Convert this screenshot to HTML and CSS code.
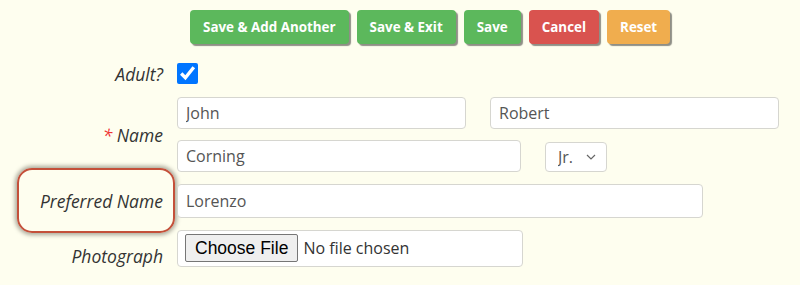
FILE: index.html
```html
<!DOCTYPE html>
<html>
<head>
    <meta charset="utf-8">
    <title>Edit Person</title>
    <link rel="stylesheet" href="styles.css">
</head>
<body>
    <div class="toolbar">
        <button type="button" class="btn btn-success">Save &amp; Add Another</button>
        <button type="button" class="btn btn-success">Save &amp; Exit</button>
        <button type="button" class="btn btn-success">Save</button>
        <button type="button" class="btn btn-danger">Cancel</button>
        <button type="button" class="btn btn-warning">Reset</button>
    </div>
    <form class="form">
        <label class="lbl" for="adult">Adult?</label>
        <div class="ctl">
            <input type="checkbox" id="adult" class="chk" checked>
        </div>

        <label class="lbl" for="first"><span class="req">*</span> Name</label>
        <div class="ctl ctl-stack">
            <div class="line">
                <input type="text" id="first" class="inp w-first" value="John">
                <input type="text" class="inp w-middle" value="Robert">
            </div>
            <div class="line">
                <input type="text" class="inp w-last" value="Corning">
                <div class="selwrap">
                    <select class="inp sel">
                        <option>Jr.</option>
                    </select>
                    <svg class="chev" width="10" height="6" viewBox="0 0 10 6"><path d="M1 1l4 4 4-4" fill="none" stroke="#666" stroke-width="1.2"/></svg>
                </div>
            </div>
        </div>

        <div class="lbl-cell">
            <label class="lbl lbl-hl" for="pref">Preferred Name</label>
        </div>
        <div class="ctl">
            <input type="text" id="pref" class="inp w-pref" value="Lorenzo">
        </div>

        <label class="lbl lbl-low" for="photo">Photograph</label>
        <div class="ctl">
            <div class="filebox">
                <input type="file" id="photo" class="file">
            </div>
        </div>
    </form>
</body>
</html>
```

FILE: styles.css
```css
body { margin: 0; background: #fefeef; font-family: "Open Sans", "Noto Sans", sans-serif; font-size: 16px; color: #333; }

.toolbar { display: flex; gap: 8px; padding: 10px 0 0 190px; }
.btn { border: none; border-radius: 4px; height: 34px; padding: 0 13px; color: #fff; font-family: inherit; font-size: 13.4px; font-weight: 700; box-shadow: 2px 2px 1px #8f8f86; }
.btn-success { background: #5cb85c; }
.btn-danger { background: #d9534f; }
.btn-warning { background: #f0ad4e; }

.form { display: grid; grid-template-columns: 175px 1fr; column-gap: 2px; row-gap: 12px; align-items: center; margin-top: 19px; }
.lbl { font-style: italic; font-size: 17.5px; line-height: 20px; text-align: right; padding-right: 12px; color: #333; }
.lbl-low { align-self: end; padding-bottom: 1px; }
.req { color: #e33; }
.lbl-cell { display: flex; justify-content: flex-end; }
.lbl-hl { display: flex; align-items: center; justify-content: flex-end; width: 158px; height: 65px; margin: -16px 0 -15px 17px; padding-right: 10px; box-sizing: border-box; border: 2px solid #c4503a; border-radius: 15px; box-shadow: 0 0 4px 2px #aaa89a; }

.ctl { display: flex; }
.ctl-stack { flex-direction: column; gap: 11px; }
.line { display: flex; gap: 24px; }

.chk { width: 21px; height: 21px; margin: 0 0 1px; accent-color: #0075ff; }

.inp { box-sizing: border-box; height: 32px; padding: 0 8px; border: 1px solid #d6d6d0; border-radius: 4px; background: #fff; font-family: inherit; font-size: 16px; color: #555; }
.w-first { width: 289px; }
.w-middle { width: 289px; }
.w-last { width: 344px; }
.selwrap { position: relative; margin-top: 2px; }
.sel { appearance: none; width: 62px; height: 30px; padding: 0 12px; }
.chev { position: absolute; right: 11px; top: 12px; pointer-events: none; }
.w-pref { width: 526px; height: 34px; }

.filebox { box-sizing: border-box; width: 346px; height: 37px; padding: 3px 7px; border: 1px solid #d6d6d0; border-radius: 4px; background: #fff; }
.file { font-family: inherit; font-size: 16px; color: #333; }
.file::file-selector-button { font-family: "Liberation Sans", Arial, sans-serif; font-size: 17.5px; height: 28px; padding: 0 9px; margin-right: 5px; border: 1px solid #767676; border-radius: 2px; background: #efefef; color: #000; }
```
